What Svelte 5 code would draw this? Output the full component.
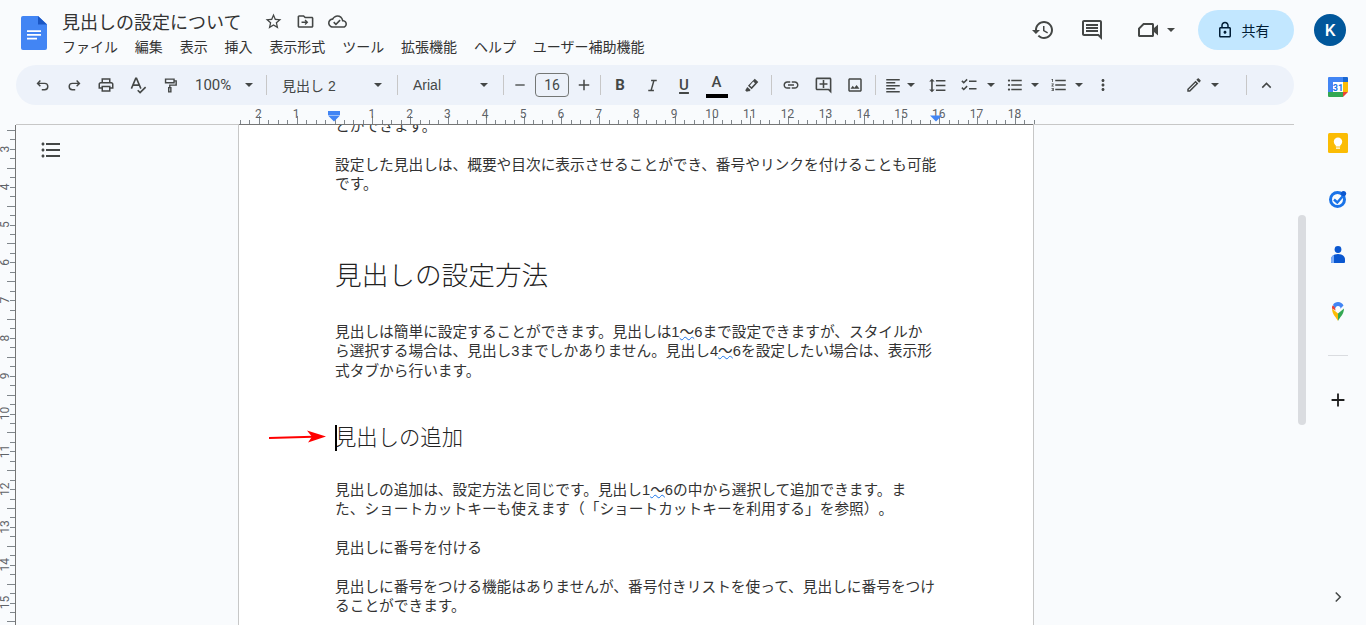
<script>
	const menus = ['ファイル', '編集', '表示', '挿入', '表示形式', 'ツール', '拡張機能', 'ヘルプ', 'ユーザー補助機能'];

	const paths = {
		star: 'M22 9.24l-7.19-.62L12 2 9.19 8.63 2 9.24l5.46 4.73L5.82 21 12 17.27 18.18 21l-1.63-7.03L22 9.24zM12 15.4l-3.76 2.27 1-4.28-3.32-2.88 4.38-.38L12 6.1l1.71 4.04 4.38.38-3.32 2.88 1 4.28L12 15.4z',
		move: 'M20 6h-8l-2-2H4c-1.1 0-2 .9-2 2v12c0 1.1.9 2 2 2h16c1.1 0 2-.9 2-2V8c0-1.1-.9-2-2-2zm0 12H4V6h5.17l2 2H20v10zM12 9.5l-1.2 1.2 1.4 1.3H7v2h5.2l-1.4 1.3 1.2 1.2 3.5-3.5z',
		cloud: 'M19.35 10.04C18.67 6.59 15.64 4 12 4 9.11 4 6.6 5.64 5.35 8.04 2.34 8.36 0 10.91 0 14c0 3.31 2.69 6 6 6h13c2.76 0 5-2.24 5-5 0-2.64-2.05-4.78-4.65-4.96zM19 18H6c-2.21 0-4-1.79-4-4 0-2.05 1.53-3.76 3.56-3.97l1.07-.11.5-.95C8.08 7.14 9.94 6 12 6c2.62 0 4.88 1.86 5.39 4.43l.3 1.5 1.53.11c1.56.1 2.78 1.41 2.78 2.96 0 1.65-1.35 3-3 3zm-9-3.82l-2.09-2.09L6.5 13.5 10 17l6.01-6.01-1.41-1.41z',
		history: 'M13 3c-4.97 0-9 4.03-9 9H1l3.89 3.89.07.14L9 12H6c0-3.87 3.13-7 7-7s7 3.13 7 7-3.13 7-7 7c-1.93 0-3.68-.79-4.94-2.06l-1.42 1.42C8.27 19.99 10.51 21 13 21c4.97 0 9-4.03 9-9s-4.03-9-9-9zm-1 5v5l4.28 2.54.72-1.21-3.5-2.08V8H12z',
		comment: 'M21.99 4c0-1.1-.89-2-1.99-2H4c-1.1 0-2 .9-2 2v12c0 1.1.9 2 2 2h14l4 4-.01-18zM20 4v13.17L18.83 16H4V4h16zM6 12h12v2H6zm0-3h12v2H6zm0-3h12v2H6z',
		video: 'M7.2 5h9.3c.83 0 1.5.67 1.5 1.5v3.6l4-3.6v11l-4-3.6v3.6c0 .83-.67 1.5-1.5 1.5h-13c-.83 0-1.5-.67-1.5-1.5V10.2L7.2 5zm.8 2L4 11v6h12V7H8z',
		lock: 'M18 8h-1V6c0-2.76-2.24-5-5-5S7 3.24 7 6v2H6c-1.1 0-2 .9-2 2v10c0 1.1.9 2 2 2h12c1.1 0 2-.9 2-2V10c0-1.1-.9-2-2-2zM9 6c0-1.66 1.34-3 3-3s3 1.34 3 3v2H9V6zm9 14H6V10h12v10zm-6-3c1.1 0 2-.9 2-2s-.9-2-2-2-2 .9-2 2 .9 2 2 2z',
		print: 'M19 8h-1V3H6v5H5c-1.66 0-3 1.34-3 3v6h4v4h12v-4h4v-6c0-1.66-1.34-3-3-3zM8 5h8v3H8V5zm8 12v2H8v-4h8v2zm2-2v-2H6v2H4v-4c0-.55.45-1 1-1h14c.55 0 1 .45 1 1v4h-2z',
		link: 'M3.9 12c0-1.71 1.39-3.1 3.1-3.1h4V7H7c-2.76 0-5 2.24-5 5s2.24 5 5 5h4v-1.9H7c-1.71 0-3.1-1.39-3.1-3.1zM8 13h8v-2H8v2zm9-6h-4v1.9h4c1.71 0 3.1 1.39 3.1 3.1s-1.39 3.1-3.1 3.1h-4V17h4c2.76 0 5-2.24 5-5s-2.24-5-5-5z',
		addcomment: 'M22 4c0-1.1-.9-2-2-2H4c-1.1 0-2 .9-2 2v12c0 1.1.9 2 2 2h14l4 4V4zm-2 13.17L18.83 16H4V4h16v13.17zM13 5h-2v4H7v2h4v4h2v-4h4V9h-4z',
		image: 'M19 5v14H5V5h14m0-2H5c-1.1 0-2 .9-2 2v14c0 1.1.9 2 2 2h14c1.1 0 2-.9 2-2V5c0-1.1-.9-2-2-2zm-4.86 8.86l-3 3.87L9 13.14 6 17h12l-3.86-5.14z',
		align: 'M3 4h18v2H3zM3 8h12v2H3zM3 12h18v2H3zM3 16h12v2H3zM3 20h18v2H3z',
		spacing: 'M6 7h2.5L5 3.5 1.5 7H4v10H1.5L5 20.5 8.5 17H6V7zm4-2v2h12V5H10zm0 14h12v-2H10v2zm0-6h12v-2H10v2z',
		bullets: 'M4 10.5c-.83 0-1.5.67-1.5 1.5s.67 1.5 1.5 1.5 1.5-.67 1.5-1.5-.67-1.5-1.5-1.5zm0-6c-.83 0-1.5.67-1.5 1.5S3.17 7.5 4 7.5 5.5 6.83 5.5 6 4.83 4.5 4 4.5zm0 12c-.83 0-1.5.68-1.5 1.5s.68 1.5 1.5 1.5 1.5-.68 1.5-1.5-.67-1.5-1.5-1.5zM7 19h14v-2H7v2zm0-6h14v-2H7v2zm0-8v2h14V5H7z',
		numbered: 'M2 17h2v.5H3v1h1v.5H2v1h3v-4H2v1zm1-9h1V4H2v1h1v3zm-1 3h1.8L2 13.1v.9h3v-1H3.2L5 10.9V10H2v1zm5-6v2h14V5H7zm0 14h14v-2H7v2zm0-6h14v-2H7v2z',
		more: 'M12 8c1.1 0 2-.9 2-2s-.9-2-2-2-2 .9-2 2 .9 2 2 2zm0 2c-1.1 0-2 .9-2 2s.9 2 2 2 2-.9 2-2-.9-2-2-2zm0 6c-1.1 0-2 .9-2 2s.9 2 2 2 2-.9 2-2-.9-2-2-2z',
		pen: 'M3 17.25V21h3.75L17.81 9.94l-3.75-3.75L3 17.25zM5.92 19H5v-.92l9.06-9.06.92.92L5.92 19zM20.71 5.63l-2.34-2.34c-.2-.2-.45-.29-.71-.29s-.51.1-.7.29l-1.83 1.83 3.75 3.75 1.83-1.83c.39-.39.39-1.02 0-1.41z',
		highlight: 'M16.6 2.6l5 4.6-9.4 10-5.2-4.8zM14.5 6.5L9.6 12l2.4 2.2 5-5.5zM6 14l4.8 4.4-1.6 1.7-2.6.1-.9.9L3 18.6l.9-.9z',
		undo: 'M9 5 5 9l4 4M5 9h10a4.5 4.5 0 0 1 0 9h-4',
		redo: 'M15 5l4 4-4 4M19 9H9a4.5 4.5 0 0 0 0 9h4',
		spell: 'M3 16 8.5 3h1L15 16M5 11.5h8.5M11 18l3 3 7-7',
		paint: 'M5 3h12v5H5zM17 5.5h3v6h-9V15M9.5 15h3v6h-3z',
		ital: 'M10 5h8M6 19h8M14 5l-4 14',
		check: 'M2.5 6.5l2.5 2.5 4.5-4.5M2.5 15.5l2.5 2.5 4.5-4.5M12 7h10M12 17h10',
		minus: 'M5 12h14',
		plus: 'M12 5v14M5 12h14',
		up: 'M6 15l6-6 6 6',
		right: 'M9 6l6 6-6 6'
	};
	const stroked = ['undo', 'redo', 'spell', 'paint', 'ital', 'check', 'minus', 'plus', 'up', 'right'];

	// ruler origin sits on the left margin marker, 1cm = 37.8px
	const cm = 37.8;
	const hTicks = Array.from({ length: 85 }, (_, i) => i);
	const hNums = [-2, -1, 1, 2, 3, 4, 5, 6, 7, 8, 9, 10, 11, 12, 13, 14, 15, 16, 17, 18];
	const vTicks = Array.from({ length: 56 }, (_, i) => i);
	const vNums = [3, 4, 5, 6, 7, 8, 9, 10, 11, 12, 13, 14, 15];
</script>

{#snippet icon(name, size = 18)}
	<svg class="ic" width={size} height={size} viewBox="0 0 24 24" aria-hidden="true">
		{#if stroked.includes(name)}
			<path d={paths[name]} fill="none" stroke="currentColor" stroke-width="2" />
		{:else}
			<path d={paths[name]} fill="currentColor" fill-rule="evenodd" />
		{/if}
	</svg>
{/snippet}

{#snippet tool(name, size = 18)}
	<span class="tool">{@render icon(name, size)}</span>
{/snippet}

<div class="docs">
	<header class="top">
		<svg class="logo" width="26" height="34" viewBox="0 0 26 36" preserveAspectRatio="none" aria-hidden="true">
			<path d="M2 0h15l9 9v25a2 2 0 0 1-2 2H2a2 2 0 0 1-2-2V2a2 2 0 0 1 2-2z" fill="#4285f4" />
			<path d="M17 0l9 9h-9z" fill="#1a56c4" />
			<path d="M6 15h14v2H6zM6 19h14v2H6zM6 23h10v2H6z" fill="#fff" />
		</svg>
		<div class="titles">
			<div class="title-row">
				<span class="title">見出しの設定について</span>
				<span class="title-icons">
					{@render icon('star', 19)}
					{@render icon('move', 19)}
					{@render icon('cloud', 19)}
				</span>
			</div>
			<nav class="menu">
				{#each menus as m}
					<span>{m}</span>
				{/each}
			</nav>
		</div>
		<div class="actions">
			<span class="act hist">{@render icon('history', 24)}</span>
			<span class="act chat">{@render icon('comment', 24)}</span>
			<span class="act meet">{@render icon('video', 24)}<i class="caret"></i></span>
			<span class="share">{@render icon('lock', 18)}<span>共有</span></span>
			<span class="avatar">K</span>
		</div>
	</header>

	<div class="below">
		<div class="work">
			<div class="toolbar">
				{@render tool('undo', 17)}
				{@render tool('redo', 17)}
				{@render tool('print')}
				{@render tool('spell', 19)}
				{@render tool('paint', 17)}
				<span class="pick zoom">100%<i class="caret"></i></span>
				<i class="sep"></i>
				<span class="pick style">見出し 2<i class="caret"></i></span>
				<i class="sep"></i>
				<span class="pick font">Arial<i class="caret"></i></span>
				<i class="sep"></i>
				<span class="size-btn">{@render icon('minus', 16)}</span>
				<span class="size-box">16</span>
				<span class="size-btn">{@render icon('plus', 18)}</span>
				<i class="sep tight"></i>
				<span class="tool letter bold">B</span>
				{@render tool('ital', 17)}
				<span class="tool letter under">U</span>
				<span class="tool letter color">A<i class="colorbar"></i></span>
				{@render tool('highlight', 17)}
				<i class="sep tight"></i>
				{@render tool('link')}
				{@render tool('addcomment', 19)}
				{@render tool('image', 18)}
				<i class="sep tight"></i>
				<span class="tool wide w42">{@render icon('align', 18)}<i class="caret"></i></span>
				{@render tool('spacing', 19)}
				<span class="tool wide w46 chk">{@render icon('check', 18)}<i class="caret"></i></span>
				<span class="tool wide w46">{@render icon('bullets', 18)}<i class="caret"></i></span>
				<span class="tool wide w44">{@render icon('numbered', 18)}<i class="caret"></i></span>
				<span class="tool w28">{@render icon('more', 18)}</span>
				<span class="tool wide pen">{@render icon('pen', 18)}<i class="caret"></i></span>
				<i class="sep tight"></i>
				{@render tool('up', 17)}
			</div>

			<svg class="hruler" width="1278" height="20" viewBox="16 105 1278 20" aria-hidden="true">
				<path d="M16 124.5H239M1033 124.5H1294" stroke="#c7c7c7" />
				<path d="M239 124.5H1033" stroke="#757575" />
				{#each hTicks as t}
					{@const x = Math.round(240 + (t * cm) / 4) + 0.5}
					<path d="M{x} {(t + 2) % 4 === 0 ? 116 : 120}V124" stroke="#80868b" />
				{/each}
				{#each hNums as n}
					<text x={334 + n * cm} y="118" text-anchor="middle" class="rnum">{Math.abs(n)}</text>
				{/each}
				<path d="M328 111h12v4h-12zM328 115.5h12l-6 6z" fill="#4285f4" />
				<path d="M930 115.5h12l-6 6z" fill="#4285f4" />
			</svg>

			<div class="pane">
				<svg class="vruler" width="16" height="500" viewBox="0 125 16 500" aria-hidden="true">
					<path d="M15.5 125V625" stroke="#757575" />
					{#each vTicks as t}
						{@const y = Math.round(130 + (t * cm) / 4) + 0.5}
						<path d="M{t % 4 === 0 ? 7 : 10} {y}H15" stroke="#80868b" />
					{/each}
					{#each vNums as n}
						<text x="0" y="0" text-anchor="middle" class="rnum" transform="translate(9 {35.6 + n * cm}) rotate(-90)">{n}</text>
					{/each}
				</svg>
				<div class="outline">{@render icon('bullets', 24)}</div>
				<article class="page">
					<div class="body">
						<p>とができます。</p>
						<p class="gap">設定した見出しは、概要や目次に表示させることができ、番号やリンクを付けることも可能<br />です。</p>
						<h1>見出しの設定方法</h1>
						<p>見出しは簡単に設定することができます。見出しは1<u>～</u>6まで設定できますが、スタイルか<br />ら選択する場合は、見出し3までしかありません。見出し4<u>～</u>6を設定したい場合は、表示形<br />式タブから行います。</p>
						<h2>見出しの追加</h2>
						<p>見出しの追加は、設定方法と同じです。見出し1<u>～</u>6の中から選択して追加できます。ま<br />た、ショートカットキーも使えます（「ショートカットキーを利用する」を参照）。</p>
						<p class="gap">見出しに番号を付ける</p>
						<p class="gap">見出しに番号をつける機能はありませんが、番号付きリストを使って、見出しに番号をつけ<br />ることができます。</p>
					</div>
					<i class="cursor"></i>
					<svg class="arrow" width="58" height="14" viewBox="0 0 58 14" aria-hidden="true">
						<path d="M0 8 44 6.8" stroke="#f00" stroke-width="2" fill="none" />
						<path d="M38 0.5 57 6.5 39 12.5 43 6.8z" fill="#f00" />
					</svg>
				</article>
			</div>
		</div>

		<aside class="side">
			<svg class="app" width="20" height="20" viewBox="0 0 20 20" aria-hidden="true">
				<path d="M1 0h14v5H5v10H0V1a1 1 0 0 1 1-1z" fill="#4285f4" />
				<rect x="5" y="5" width="10" height="10" fill="#fff" />
				<path d="M15 5h5v10h-5z" fill="#fbbc04" />
				<path d="M0 15h15v5H1a1 1 0 0 1-1-1z" fill="#34a853" />
				<path d="M15 15h5l-5 5z" fill="#ea4335" />
				<path d="M15 0h4a1 1 0 0 1 1 1v4h-5z" fill="#1967d2" />
				<text x="10" y="13.5" text-anchor="middle" class="cal">31</text>
			</svg>
			<svg class="app" width="20" height="20" viewBox="0 0 20 20" aria-hidden="true">
				<rect width="20" height="20" rx="1.5" fill="#fbbc04" />
				<circle cx="10" cy="8.8" r="4.2" fill="#fff" />
				<path d="M7.8 12h4.4v1.6H7.8zM8 14.4h4v1.4H8z" fill="#fff" />
			</svg>
			<svg class="app" width="20" height="20" viewBox="0 0 20 20" aria-hidden="true">
				<circle cx="9.5" cy="10.5" r="7" fill="none" stroke="#1a73e8" stroke-width="3" />
				<path d="M6 10.5 9.3 13.5 17.5 4" fill="none" stroke="#1a73e8" stroke-width="2.4" />
				<circle cx="15.5" cy="4.5" r="2.6" fill="#0b57d0" />
			</svg>
			<svg class="app" width="20" height="20" viewBox="0 0 20 20" aria-hidden="true">
				<circle cx="10" cy="4.5" r="3.4" fill="#0b57d0" />
				<path d="M3 17v-2.5C3 11 6 9 10 9s7 2 7 5.5V17a1 1 0 0 1-1 1H4a1 1 0 0 1-1-1z" fill="#0b57d0" />
				<path d="M3 17v-2.5C3 12 4.5 10.5 6 10v8H4a1 1 0 0 1-1-1z" fill="#7cacf8" />
			</svg>
			<svg class="app" width="20" height="20" viewBox="0 0 20 20" aria-hidden="true">
				<path d="M10 20C8.5 16.5 4 13.5 4 7.5L10 12.5z" fill="#fbbc04" />
				<path d="M10 20c1.5-3.5 6-6.5 6-12.5L10 12.5z" fill="#34a853" />
				<path d="M4.6 4.5C3.9 5.5 4 6.5 4 7.500l3.7 2-1-4.500z" fill="#ea4335" />
				<path d="M5 3.900C6 1.800 8 1 10 1c2.5 0 4.500 1.300 5.500 3.500L12 8H8z" fill="#4285f4" />
				<circle cx="10" cy="7.5" r="2.5" fill="#fff" />
			</svg>
			<i class="divider"></i>
			<span class="add">{@render icon('plus', 22)}</span>
			<span class="expand">{@render icon('right', 18)}</span>
			<i class="scrollbar"></i>
		</aside>
	</div>
</div>

<style>
	:global(body) {
		margin: 0;
		overflow: hidden;
	}

	.docs {
		width: 1366px;
		height: 625px;
		overflow: hidden;
		display: flex;
		flex-direction: column;
		background: #f9fbfd;
		color: #444746;
		font-family: 'Liberation Sans', 'Noto Sans CJK JP', sans-serif;
	}

	.ic {
		display: block;
		flex: none;
	}

	.caret {
		display: block;
		flex: none;
		width: 0;
		height: 0;
		border-left: 4px solid transparent;
		border-right: 4px solid transparent;
		border-top: 4px solid #444746;
	}

	.top {
		height: 65px;
		flex: none;
		display: flex;
		align-items: flex-start;
		padding: 0 20px 0 21px;
		box-sizing: border-box;
	}

	.logo {
		margin: 16px 15px 0 0;
		flex: none;
	}

	.titles {
		padding-top: 8px;
	}

	.title-row {
		display: flex;
		align-items: center;
		height: 26px;
	}

	.title {
		font-size: 18px;
		color: #333;
		width: 202px;
		white-space: nowrap;
	}

	.title-icons {
		display: flex;
		gap: 13px;
		color: #444746;
	}

	.menu {
		display: flex;
		gap: 16.85px;
		margin-top: 3px;
		font-size: 14px;
		line-height: 20px;
		color: #333;
		white-space: nowrap;
	}

	.actions {
		margin-left: auto;
		display: flex;
		align-items: center;
		height: 60px;
	}

	.act {
		display: flex;
		align-items: center;
		color: #444746;
	}

	.chat {
		margin-left: 25px;
	}

	.meet {
		margin-left: 32px;
		gap: 7px;
	}

	.share {
		margin-left: 23px;
		width: 96px;
		height: 40px;
		padding-right: 7px;
		box-sizing: border-box;
		border-radius: 20px;
		background: #c2e7ff;
		color: #001d35;
		display: flex;
		align-items: center;
		justify-content: center;
		gap: 8px;
		font-size: 14px;
	}

	.avatar {
		margin-left: 20px;
		width: 32px;
		height: 32px;
		border-radius: 50%;
		background: #01579b;
		color: #fff;
		display: flex;
		align-items: center;
		justify-content: center;
		font-size: 17px;
		font-family: 'Roboto', sans-serif;
		font-weight: 500;
	}

	.below {
		flex: 1;
		display: flex;
		min-height: 0;
	}

	.work {
		flex: 1;
		min-width: 0;
		display: flex;
		flex-direction: column;
	}

	.toolbar {
		height: 40px;
		flex: none;
		margin-left: 16px;
		padding: 0 12px 0 10px;
		border-radius: 20px;
		background: #edf2fa;
		display: flex;
		align-items: center;
		box-sizing: border-box;
		white-space: nowrap;
	}

	.tool {
		width: 32px;
		height: 32px;
		flex: none;
		display: flex;
		align-items: center;
		justify-content: center;
		color: #444746;
		position: relative;
	}

	.tool.wide {
		justify-content: flex-start;
		gap: 7px;
	}

	.tool.w42 {
		width: 42px;
		padding-left: 5px;
		box-sizing: border-box;
		gap: 5px;
	}

	.tool.w46 {
		width: 46px;
		padding-left: 7px;
		box-sizing: border-box;
	}

	.tool.chk {
		gap: 9px;
	}

	.tool.w44 {
		width: 44px;
		padding-left: 5px;
		box-sizing: border-box;
	}

	.tool.w28 {
		width: 28px;
	}

	.tool.pen {
		width: 47px;
		padding-left: 7px;
		box-sizing: border-box;
		margin-left: auto;
		margin-right: 17px;
		gap: 8px;
	}

	.letter {
		font-family: 'Roboto', sans-serif;
		font-size: 15px;
		font-weight: 500;
	}

	.bold {
		font-weight: 700;
	}

	.under {
		text-decoration: underline;
		text-underline-offset: 2px;
		text-decoration-thickness: 1.5px;
	}

	.color {
		padding-bottom: 7px;
		box-sizing: border-box;
		width: 33px;
		margin-right: 2px;
	}

	.colorbar {
		position: absolute;
		left: 6px;
		right: 5px;
		bottom: 3px;
		height: 4px;
		background: #000;
	}

	.sep {
		flex: none;
		width: 1px;
		height: 20px;
		margin: 0 8px;
		background: #c7c7c7;
	}

	.sep.tight {
		margin: 0 3px 0 4px;
	}

	.size-btn + .sep.tight {
		margin-left: 8px;
	}

	.pick {
		flex: none;
		display: flex;
		align-items: center;
		justify-content: space-between;
		box-sizing: border-box;
		height: 32px;
		font-size: 14px;
		color: #444746;
	}

	.zoom {
		width: 72px;
		padding: 0 5px 0 9px;
		font-family: 'Roboto', sans-serif;
		font-size: 15px;
	}

	.style {
		width: 114px;
		padding: 0 7px 0 7px;
	}

	.font {
		width: 89px;
		padding: 0 7px 0 7px;
	}

	.size-btn {
		width: 16px;
		flex: none;
		display: flex;
		justify-content: center;
		color: #444746;
	}

	.size-box {
		flex: none;
		width: 34px;
		height: 24px;
		margin: 0 7px;
		box-sizing: border-box;
		border: 1px solid #747775;
		border-radius: 4px;
		display: flex;
		align-items: center;
		justify-content: center;
		font-family: 'Roboto', sans-serif;
		font-size: 14px;
		color: #444746;
	}

	.hruler {
		display: block;
		flex: none;
		margin-left: 16px;
	}

	.rnum {
		font-family: 'Roboto', sans-serif;
		font-size: 12px;
		fill: #5f6368;
	}

	.cal {
		font-family: 'Roboto', sans-serif;
		font-size: 9px;
		font-weight: 700;
		fill: #1a73e8;
	}

	.pane {
		flex: 1;
		min-height: 0;
		display: flex;
		position: relative;
		overflow: hidden;
	}

	.vruler {
		flex: none;
		display: block;
	}

	.outline {
		width: 222px;
		box-sizing: border-box;
		flex: none;
		padding: 13px 0 0 23px;
		color: #444746;
	}

	.page {
		width: 796px;
		flex: none;
		box-sizing: border-box;
		border-left: 1px solid #c7c7c7;
		border-right: 1px solid #c7c7c7;
		background: #fff;
		position: relative;
		padding-left: 96px;
	}

	.body {
		margin-top: -8px;
		font-size: 14.7px;
		line-height: 19.3px;
		color: #333;
		white-space: nowrap;
		text-spacing-trim: space-all;
	}

	p {
		margin: 0;
	}

	.gap {
		margin-top: 19.3px;
	}

	u {
		text-decoration: underline wavy #1a73e8 1px;
		text-underline-offset: -1px;
	}

	h1 {
		margin: 64px 0 0;
		font-size: 26.67px;
		line-height: 36px;
		font-weight: 300;
		color: #222;
		padding-bottom: 29px;
	}

	h2 {
		margin: 42px 0 0;
		font-size: 21.33px;
		line-height: 30px;
		font-weight: 300;
		color: #222;
		padding-bottom: 28px;
	}

	.cursor {
		position: absolute;
		left: 96px;
		top: 300px;
		width: 2px;
		height: 26px;
		background: #000;
	}

	.arrow {
		position: absolute;
		left: 30px;
		top: 305px;
	}

	.side {
		width: 72px;
		flex: none;
		position: relative;
		display: flex;
		flex-direction: column;
		align-items: center;
		padding: 12px 0 0 16px;
		box-sizing: border-box;
		color: #1f1f1f;
	}

	.app {
		display: block;
		margin-bottom: 36px;
		flex: none;
	}

	.divider {
		display: block;
		width: 20px;
		height: 1px;
		background: #dadce0;
		margin-top: -2px;
	}

	.add {
		margin-top: 33px;
	}

	.expand {
		margin-top: auto;
		margin-bottom: 19px;
		color: #444746;
	}

	.scrollbar {
		position: absolute;
		left: 4px;
		top: 150px;
		width: 8px;
		height: 210px;
		border-radius: 4px;
		background: #dadce0;
	}
</style>
